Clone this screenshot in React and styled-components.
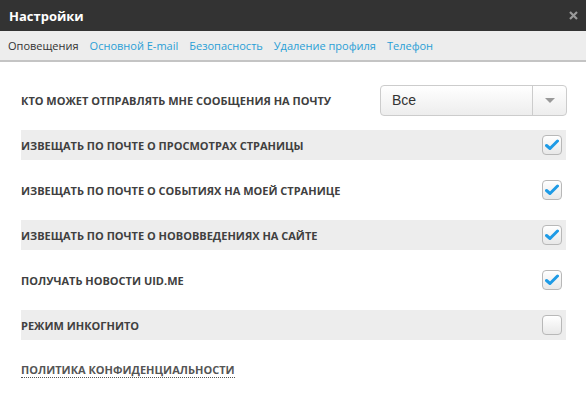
import React from "react";
import styled, { createGlobalStyle } from "styled-components";

const Global = createGlobalStyle`
  html, body { margin: 0; padding: 0; background: #fff; }
  body { font-family: "Open Sans", "Liberation Sans", sans-serif; }
  * { box-sizing: border-box; }
`;

const Dialog = styled.div`
  width: 586px;
  height: 396px;
  background: #fff;
  display: flex;
  flex-direction: column;
`;

const Header = styled.div`
  height: 31px;
  background: #333333;
  display: flex;
  align-items: center;
  justify-content: space-between;
  padding: 0 8px 0 9px;
`;

const Title = styled.div`
  color: #fff;
  font-weight: 700;
  font-size: 13px;
`;

const Close = styled.div`
  width: 10px;
  height: 10px;
  display: flex;
  align-items: center;
  justify-content: center;
`;

const Tabs = styled.div`
  height: 31px;
  background: #ededed;
  border-bottom: 2px solid #c4c4c4;
  display: flex;
  align-items: center;
  gap: 11px;
  padding: 0 8px;
`;

const Tab = styled.span`
  font-size: 11px;
  color: ${(p) => (p.$active ? "#333" : "#2a9fd6")};
  cursor: pointer;
`;

const Body = styled.div`
  padding: 23px 20px 0 21px;
  display: flex;
  flex-direction: column;
  gap: 15px;
`;

const Row = styled.div`
  height: 30px;
  display: flex;
  align-items: center;
  justify-content: space-between;
  background: ${(p) => (p.$shaded ? "#ededed" : "transparent")};
`;

const Label = styled.span`
  font-size: 11px;
  font-weight: 700;
  color: #404040;
  text-transform: uppercase;
`;

const Select = styled.div`
  width: 187px;
  height: 31px;
  flex-shrink: 0;
  border: 1px solid #ccc;
  border-radius: 4px;
  background: linear-gradient(#ffffff, #ededed);
  display: flex;
  margin-right: -1px;
`;

const SelectValue = styled.div`
  flex: 1;
  display: flex;
  align-items: center;
  padding-left: 11px;
  font-family: "Liberation Sans", Arial, sans-serif;
  font-size: 14px;
  color: #333;
`;

const SelectArrow = styled.div`
  width: 34px;
  border-left: 1px solid #ccc;
  display: flex;
  align-items: center;
  justify-content: center;
`;

const Check = styled.div`
  width: 20px;
  height: 20px;
  margin-right: 4px;
  border: 1px solid #b8b8b8;
  border-radius: 4px;
  background: linear-gradient(#ffffff, #e8e8e8);
  display: flex;
  align-items: center;
  justify-content: center;
`;

const Policy = styled.a`
  font-size: 11px;
  font-weight: 700;
  color: #555;
  text-transform: uppercase;
  text-decoration: none;
  border-bottom: 1px dotted #555;
  line-height: 14px;
`;

const CheckBox = ({ checked }) => (
  <Check>
    {checked && (
      <svg width="14" height="12" viewBox="0 0 14 12">
        <path d="M1.5 6.5 L5 9.5 L12.5 2" fill="none" stroke="#1e9be6" strokeWidth="3" strokeLinecap="round" strokeLinejoin="round" />
      </svg>
    )}
  </Check>
);

const rows = [
  { label: "Извещать по почте о просмотрах страницы", checked: true },
  { label: "Извещать по почте о событиях на моей странице", checked: true },
  { label: "Извещать по почте о нововведениях на сайте", checked: true },
  { label: "Получать новости uid.me", checked: true },
  { label: "Режим инкогнито", checked: false },
];

export default function App() {
  return (
    <Dialog>
      <Global />
      <Header>
        <Title>Настройки</Title>
        <Close>
          <svg width="9" height="9" viewBox="0 0 9 9">
            <path d="M1 1 L8 8 M8 1 L1 8" stroke="#9a9a9a" strokeWidth="2.2" />
          </svg>
        </Close>
      </Header>
      <Tabs>
        <Tab $active>Оповещения</Tab>
        <Tab>Основной E-mail</Tab>
        <Tab>Безопасность</Tab>
        <Tab>Удаление профиля</Tab>
        <Tab>Телефон</Tab>
      </Tabs>
      <Body>
        <Row>
          <Label>Кто может отправлять мне сообщения на почту</Label>
          <Select>
            <SelectValue>Все</SelectValue>
            <SelectArrow>
              <svg width="10" height="5" viewBox="0 0 10 5">
                <path d="M0 0 L10 0 L5 5 Z" fill="#999" />
              </svg>
            </SelectArrow>
          </Select>
        </Row>
        {rows.map((r, i) => (
          <Row key={r.label} $shaded={i % 2 === 0}>
            <Label>{r.label}</Label>
            <CheckBox checked={r.checked} />
          </Row>
        ))}
        <Row>
          <Policy href="#">Политика конфиденциальности</Policy>
        </Row>
      </Body>
    </Dialog>
  );
}
